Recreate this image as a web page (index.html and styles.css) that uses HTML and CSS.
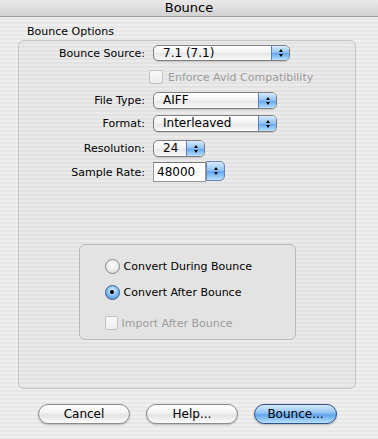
FILE: index.html
```html
<!DOCTYPE html>
<html lang="en">
<head>
  <meta charset="UTF-8"/>
  <title>Bounce</title>
  <link rel="stylesheet" href="styles.css">
</head>
<body>

  <!-- Title bar -->
  <div class="titlebar">Bounce</div>

  <div class="sheet">
    <div class="group-title">Bounce Options</div>

    <!-- Options group -->
    <div class="group">
      <div class="form">
        <div class="row row-source">
          <label class="label">Bounce Source:</label>
          <div class="popup popup-wide">
            <span class="popup-value">7.1 (7.1)</span>
            <span class="popup-arrows"><i class="up"></i><i class="down"></i></span>
          </div>
        </div>

        <div class="row row-avid">
          <span class="label"></span>
          <div class="check disabled">
            <span class="box"></span>
            <span>Enforce Avid Compatibility</span>
          </div>
        </div>

        <div class="row row-type">
          <label class="label">File Type:</label>
          <div class="popup popup-mid">
            <span class="popup-value">AIFF</span>
            <span class="popup-arrows"><i class="up"></i><i class="down"></i></span>
          </div>
        </div>

        <div class="row row-format">
          <label class="label">Format:</label>
          <div class="popup popup-mid">
            <span class="popup-value">Interleaved</span>
            <span class="popup-arrows"><i class="up"></i><i class="down"></i></span>
          </div>
        </div>

        <div class="row row-res">
          <label class="label">Resolution:</label>
          <div class="popup popup-small">
            <span class="popup-value">24</span>
            <span class="popup-arrows"><i class="up"></i><i class="down"></i></span>
          </div>
        </div>

        <div class="row row-rate">
          <label class="label">Sample Rate:</label>
          <div class="combo">
            <span class="combo-field">48000</span>
            <span class="popup-arrows"><i class="up"></i><i class="down"></i></span>
          </div>
        </div>
      </div>

      <!-- Conversion options -->
      <div class="convert-box">
        <div class="radio">
          <span class="dot"></span>
          <span>Convert During Bounce</span>
        </div>
        <div class="radio selected">
          <span class="dot"></span>
          <span>Convert After Bounce</span>
        </div>
        <div class="check disabled import">
          <span class="box"></span>
          <span>Import After Bounce</span>
        </div>
      </div>
    </div>

    <!-- Dialog buttons -->
    <div class="buttons">
      <button class="btn btn-cancel">Cancel</button>
      <button class="btn btn-help">Help...</button>
      <button class="btn btn-default">Bounce...</button>
    </div>
  </div>

</body>
</html>
```

FILE: styles.css
```css
/**********************************************
 *  Base / pinstripe window
 **********************************************/
body {
  margin: 0;
  width: 378px;
  height: 439px;
  overflow: hidden;
  font-family: "DejaVu Sans", "Liberation Sans", sans-serif;
  font-size: 11px;
  color: #000;
  background: repeating-linear-gradient(to bottom, #efefef 0, #efefef 2px, #e7e7e7 2px, #e7e7e7 4px);
}

.titlebar {
  height: 16px;
  line-height: 16px;
  text-align: center;
  font-size: 13px;
  border-bottom: 1px solid #9c9c9c;
  background: linear-gradient(to bottom, #e9e9e9, #d2d2d2);
}

.sheet {
  padding-top: 8px;
}

.group-title {
  height: 14px;
  line-height: 14px;
  margin: 0 0 1px 27px;
}

/**********************************************
 *  Group box
 **********************************************/
.group {
  margin: 0 22px 0 18px;
  height: 349px;
  box-sizing: border-box;
  border: 1px solid #c4c4c4;
  border-radius: 6px;
  background: rgba(0, 0, 0, 0.02);
  padding-top: 4px;
}

.row {
  display: flex;
  align-items: center;
}

.label {
  width: 126px;
  text-align: right;
  margin-right: 8px;
  flex-shrink: 0;
}

.row-source { height: 16px; }
.row-avid   { height: 14px; margin-top: 9px; }
.row-type   { height: 17px; margin-top: 8px; }
.row-format { height: 17px; margin-top: 6px; }
.row-res    { height: 17px; margin-top: 8px; }
.row-rate   { height: 20px; margin-top: 5px; }

/**********************************************
 *  Popup menus
 **********************************************/
.popup {
  display: flex;
  height: 100%;
  box-sizing: border-box;
  border: 1px solid #7f7f7f;
  border-radius: 5px;
  background: linear-gradient(to bottom, #ffffff, #f1f1f1 50%, #e6e6e6 51%, #fafafa);
  overflow: hidden;
  box-shadow: 0 1px 1px rgba(0, 0, 0, 0.15);
}

.popup-wide  { width: 137px; }
.popup-mid   { width: 124px; }
.popup-small { width: 52px; }

.popup-value {
  flex: 1;
  padding-left: 9px;
  line-height: 15px;
  font-size: 12px;
}

.popup-arrows {
  width: 17px;
  display: flex;
  flex-direction: column;
  align-items: center;
  justify-content: center;
  gap: 2px;
  border-left: 1px solid #5a7fbf;
  background: linear-gradient(to bottom, #d9ecff, #8cc0f2 50%, #5ea4ec 51%, #b9e0ff);
}

.popup-arrows i {
  width: 0;
  height: 0;
  border-left: 2.5px solid transparent;
  border-right: 2.5px solid transparent;
}

.popup-arrows .up { border-bottom: 3px solid #000; }
.popup-arrows .down { border-top: 3px solid #000; }

/* text field + stepper */
.combo {
  display: flex;
  height: 20px;
}

.combo-field {
  width: 53px;
  box-sizing: border-box;
  border: 1px solid #999;
  border-top-color: #777;
  background: #fff;
  padding-left: 3px;
  line-height: 18px;
  font-size: 12px;
}

.combo .popup-arrows {
  height: 18px;
  margin-top: -1px;
  border: 1px solid #6b82ad;
  border-radius: 0 5px 5px 0;
}

/**********************************************
 *  Checkboxes and radios
 **********************************************/
.check {
  display: flex;
  align-items: center;
  gap: 5px;
}

.check .box {
  width: 12px;
  height: 12px;
  border: 1px solid #c2c2c2;
  border-radius: 2px;
  background: linear-gradient(to bottom, #fafafa, #ececec);
}

.check.disabled {
  color: #9c9c9c;
  margin-left: -4px;
}

.convert-box {
  width: 217px;
  height: 96px;
  box-sizing: border-box;
  margin: 62px auto 0;
  border: 1px solid #b9b9b9;
  border-radius: 6px;
  background: #e3e3e3;
  padding: 13px 0 0 25px;
}

.radio {
  display: flex;
  align-items: center;
  gap: 4px;
  height: 16px;
  margin-bottom: 10px;
}

.radio .dot {
  width: 13px;
  height: 13px;
  border: 1px solid #8a8a8a;
  border-radius: 50%;
  background: radial-gradient(circle at 50% 35%, #ffffff, #e4e4e4 70%, #cfcfcf);
  display: flex;
  align-items: center;
  justify-content: center;
}

.radio.selected .dot {
  border-color: #3b5c94;
  background: radial-gradient(circle at 50% 35%, #e3f1ff, #74b3f0 60%, #3d86d6);
}

.radio.selected .dot::after {
  content: "";
  width: 4px;
  height: 4px;
  border-radius: 50%;
  background: #000;
}

.check.import {
  margin: 16px 0 0 0;
  gap: 4px;
}

.check.import .box {
  width: 11px;
  height: 12px;
}

/**********************************************
 *  Dialog buttons
 **********************************************/
.buttons {
  display: flex;
  margin: 15px 0 0 38px;
  gap: 16px;
}

.btn {
  height: 20px;
  padding: 0;
  border: 1px solid #8a8a8a;
  border-radius: 10px;
  font-family: "DejaVu Sans", "Liberation Sans", sans-serif;
  font-size: 12px;
  color: #000;
  background: linear-gradient(to bottom, #ffffff, #f2f2f2 45%, #e2e2e2 55%, #fbfbfb);
  box-shadow: 0 1px 2px rgba(0, 0, 0, 0.25);
}

.btn-cancel { width: 92px; }
.btn-help   { width: 92px; }
.btn-default {
  width: 83px;
  border-color: #2f4f8a;
  background: linear-gradient(to bottom, #d6ebff, #8ec2f3 45%, #5ea4ec 55%, #b9e2ff);
}
```
